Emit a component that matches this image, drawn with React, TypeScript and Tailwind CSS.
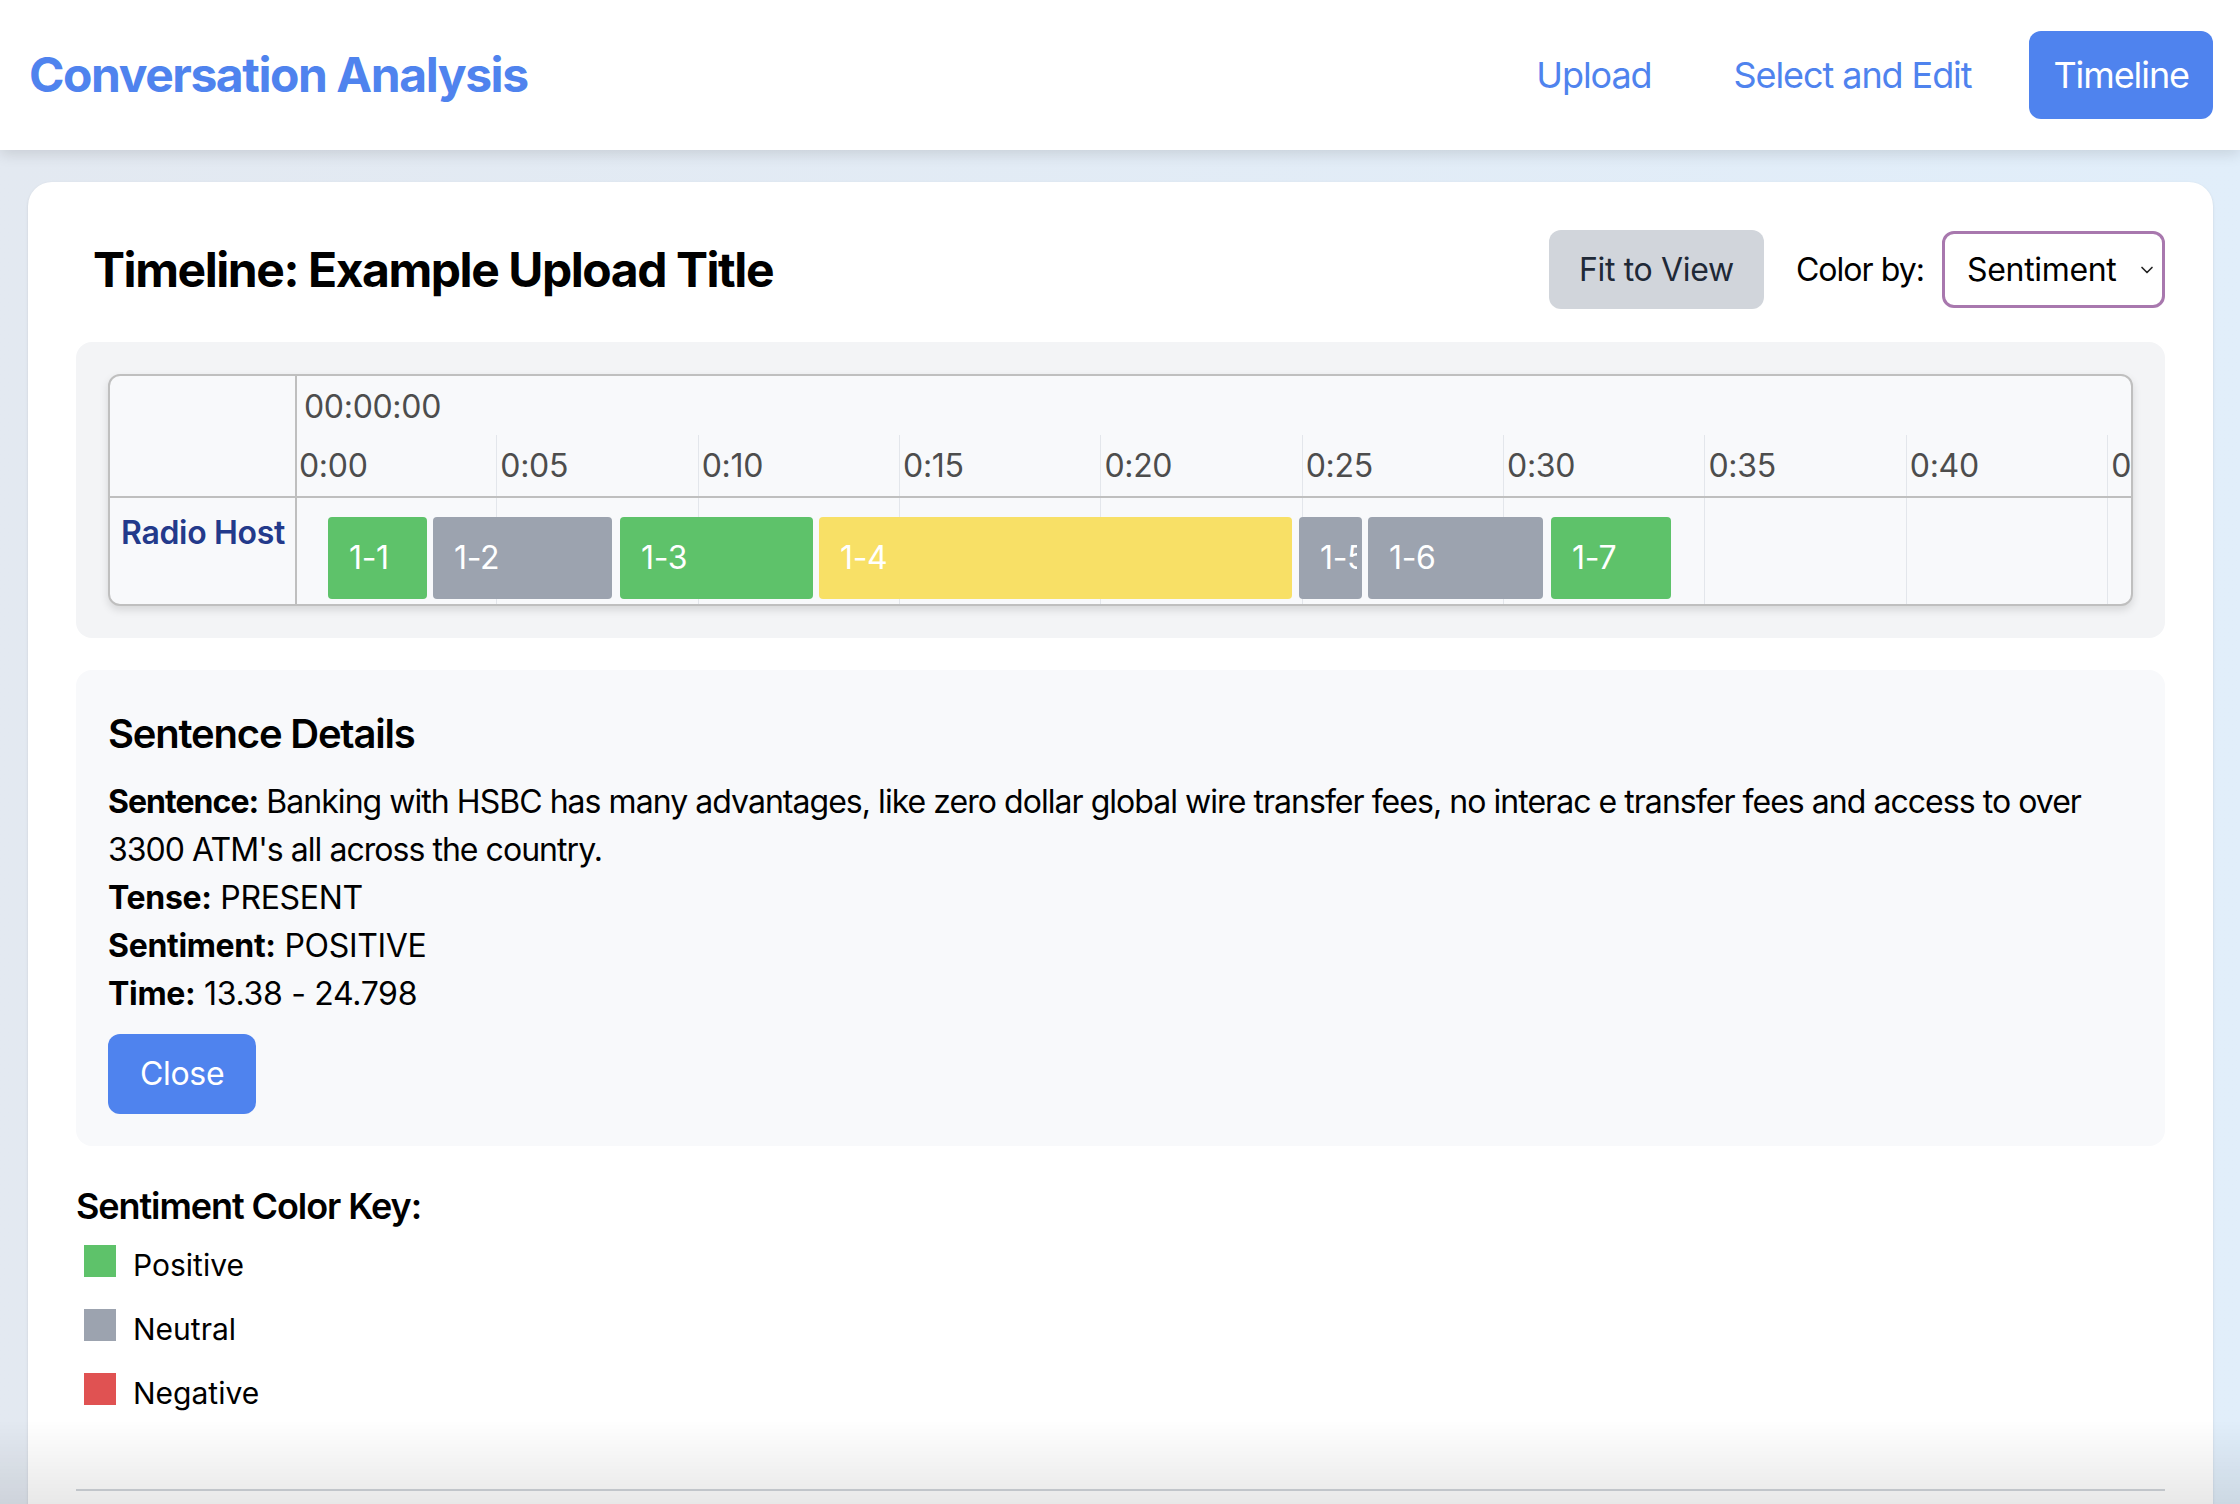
import { ChevronDown } from 'lucide-react'

const TICK_STEP = 201.35
const TICK_ORIGIN = -2
const ticks = ['0:00', '0:05', '0:10', '0:15', '0:20', '0:25', '0:30', '0:35', '0:40', '0:45']

type Sentiment = 'positive' | 'neutral' | 'mixed'

const sentimentColor: Record<Sentiment, string> = {
  positive: 'bg-[#5ec26a]',
  neutral: 'bg-[#9ca3af]',
  mixed: 'bg-[#f8e066]',
}

// pixel spans on the axis (x from the start of the axis area)
const items: { id: string; from: number; to: number; sentiment: Sentiment }[] = [
  { id: '1-1', from: 31, to: 130, sentiment: 'positive' },
  { id: '1-2', from: 136, to: 315, sentiment: 'neutral' },
  { id: '1-3', from: 323, to: 516, sentiment: 'positive' },
  { id: '1-4', from: 522, to: 995, sentiment: 'mixed' },
  { id: '1-5', from: 1002, to: 1065, sentiment: 'neutral' },
  { id: '1-6', from: 1071, to: 1246, sentiment: 'neutral' },
  { id: '1-7', from: 1254, to: 1374, sentiment: 'positive' },
]

function Header() {
  return (
    <header className="relative z-10 flex h-[150px] items-center justify-between bg-white pl-[29px] pr-[27px] shadow-[0_4px_14px_rgba(0,0,0,0.12)]">
      <h1 className="text-[48px] font-bold leading-none tracking-[-0.03em] text-[#4f83ee]">
        Conversation Analysis
      </h1>
      <nav className="flex items-center gap-[34px] text-[36px] tracking-[-0.03em]">
        <a className="flex h-[88px] items-center px-[24px] text-[#4f83ee]">Upload</a>
        <a className="flex h-[88px] items-center px-[24px] text-[#4f83ee]">Select and Edit</a>
        <a className="flex h-[88px] items-center rounded-[12px] bg-[#4f83ee] px-[24px] text-white">
          Timeline
        </a>
      </nav>
    </header>
  )
}

function GridLines({ top }: { top: number }) {
  return (
    <>
      {ticks.map((t, i) =>
        i === 0 ? null : (
          <div
            key={t}
            className="absolute bottom-0 w-px bg-[#e3e6eb]"
            style={{ left: TICK_ORIGIN + TICK_STEP * i, top }}
          />
        ),
      )}
    </>
  )
}

function Timeline() {
  return (
    <div className="overflow-hidden rounded-[12px] border-2 border-[#bfbfbf] bg-[#f8f9fb] shadow-[0_4px_8px_rgba(0,0,0,0.12)]">
      <div className="flex h-[122px] border-b-2 border-[#bfbfbf]">
        <div className="w-[187px] shrink-0 border-r-2 border-[#bfbfbf]" />
        <div className="relative flex-1 overflow-hidden text-[32px] leading-none text-[#4d4d4d]">
          <GridLines top={59} />
          <span className="absolute left-[7px] top-[15px]">00:00:00</span>
          {ticks.map((t, i) => (
            <span
              key={t}
              className="absolute top-[74px] whitespace-nowrap"
              style={{ left: TICK_ORIGIN + TICK_STEP * i + 4 }}
            >
              {t}
            </span>
          ))}
        </div>
      </div>
      <div className="flex h-[106px]">
        <div className="w-[187px] shrink-0 border-r-2 border-[#bfbfbf] pl-[11px] pt-[19px] text-[32px] font-semibold leading-none text-[#233a8b]">
          Radio Host
        </div>
        <div className="relative flex-1 overflow-hidden">
          <GridLines top={0} />
          {items.map((it) => (
            <div
              key={it.id}
              className={`absolute top-[19px] flex h-[82px] items-center rounded-[4px] pl-[21px] pr-[5px] text-[32px] leading-normal text-white ${sentimentColor[it.sentiment]}`}
              style={{ left: it.from, width: it.to - it.from }}
            >
              <span className="block overflow-hidden whitespace-nowrap">{it.id}</span>
            </div>
          ))}
        </div>
      </div>
    </div>
  )
}

function SentenceDetails() {
  return (
    <div className="rounded-[16px] bg-[#f8f9fb] px-[32px] pb-[32px] pt-[36px] text-[32px] leading-[48px] text-black">
      <h3 className="mb-[16px] text-[40px] font-semibold leading-[56px] tracking-[-0.03em]">Sentence Details</h3>
      <p className="tracking-[-0.03em]">
        <span className="font-bold">Sentence:</span> Banking with HSBC has many advantages, like zero dollar
        global wire transfer fees, no interac e transfer fees and access to over 3300 ATM's all across the
        country.
      </p>
      <p>
        <span className="font-bold">Tense:</span> PRESENT
      </p>
      <p>
        <span className="font-bold">Sentiment:</span> POSITIVE
      </p>
      <p>
        <span className="font-bold">Time:</span> 13.38 - 24.798
      </p>
      <button className="mt-[16px] h-[80px] rounded-[12px] bg-[#4f83ee] px-[32px] text-[32px] text-white">
        Close
      </button>
    </div>
  )
}

const legend = [
  { label: 'Positive', color: 'bg-[#5ec26a]' },
  { label: 'Neutral', color: 'bg-[#9ca3af]' },
  { label: 'Negative', color: 'bg-[#e05252]' },
]

function ColorKey() {
  return (
    <div className="mt-[32px]">
      <h4 className="mb-[11px] text-[36px] font-semibold leading-[56px] tracking-[-0.03em] text-black">
        Sentiment Color Key:
      </h4>
      <div className="flex flex-col gap-[32px] pl-[8px]">
        {legend.map((l) => (
          <div key={l.label} className="flex h-[32px] items-start gap-[17px]">
            <span className={`h-[32px] w-[32px] shrink-0 ${l.color}`} />
            <span className="mt-[4px] text-[30px] leading-[32px] tracking-normal text-black">{l.label}</span>
          </div>
        ))}
      </div>
    </div>
  )
}

export default function App() {
  return (
    <div className="min-h-screen bg-gradient-to-r from-[#e3e9f1] to-[#e1eefa] font-['Inter',sans-serif] tracking-[-0.02em]">
      <Header />
      <main className="px-[28px] pt-[32px] pr-[27px]">
        <section className="rounded-[24px] bg-white px-[48px] pt-[48px] pb-[120px] shadow-sm">
          <div className="mb-[33px] flex h-[79px] items-center justify-between">
            <h2 className="pl-[17px] text-[48px] font-bold leading-none tracking-[-0.03em] text-black">
              Timeline: Example Upload Title
            </h2>
            <div className="flex items-center">
              <button className="h-[79px] rounded-[12px] bg-[#d1d5db] px-[30px] text-[32px] text-[#1f2937]">
                Fit to View
              </button>
              <span className="ml-[32px] mr-[18px] text-[32px] tracking-[-0.03em] text-black">Color by:</span>
              <div className="relative">
                <select
                  defaultValue="sentiment"
                  className="h-[77px] w-[223px] appearance-none rounded-[12px] border-[3px] border-[#a878ae] bg-white pl-[22px] text-[32px] text-black outline-none"
                >
                  <option value="sentiment">Sentiment</option>
                  <option value="tense">Tense</option>
                </select>
                <ChevronDown
                  className="pointer-events-none absolute right-[8px] top-[29px] h-[20px] w-[20px] text-[#222]"
                  strokeWidth={2}
                />
              </div>
            </div>
          </div>

          <div className="mb-[32px] rounded-[16px] bg-[#f3f4f6] p-[32px]">
            <Timeline />
          </div>

          <SentenceDetails />
          <ColorKey />

          <div className="mt-[84px] border-t-2 border-[#d1d5db]" />
        </section>
      </main>
      <div className="pointer-events-none fixed inset-x-0 bottom-0 h-[84px] bg-gradient-to-b from-transparent to-black/[0.09]" />
    </div>
  )
}
